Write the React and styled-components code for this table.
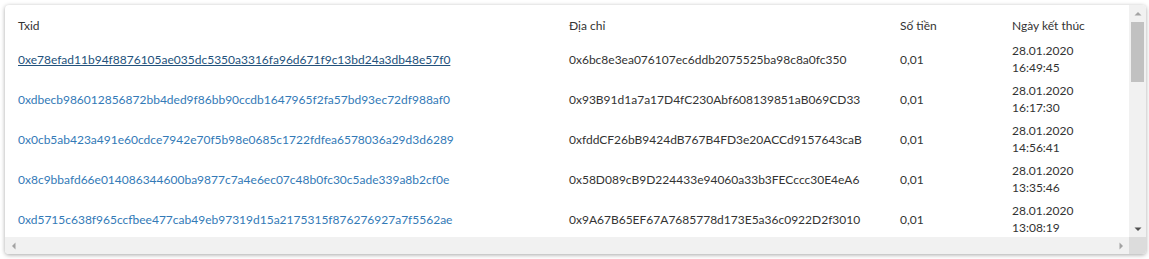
import React from "react";
import styled, { createGlobalStyle } from "styled-components";

const GlobalStyle = createGlobalStyle`
  body {
    margin: 0;
    padding: 5px;
    background: #fff;
    font-family: Lato, "Noto Sans", sans-serif;
  }
`;

const Card = styled.div`
  width: 1141px;
  height: 249px;
  border-radius: 4px;
  box-shadow: 0 1px 4px rgba(0, 0, 0, 0.35);
  background: #fff;
  overflow: hidden;
  display: grid;
  grid-template-columns: 1fr 17px;
  grid-template-rows: 1fr 17px;
`;

const Viewport = styled.div`
  overflow: hidden;
`;

const Row = styled.div`
  display: grid;
  grid-template-columns: 551px 331px 112px 1fr;
  height: ${(p) => (p.$head ? "34px" : "40px")};
  align-items: ${(p) => (p.$head ? "start" : "center")};
  padding-top: ${(p) => (p.$head ? "12px" : "0")};
  box-sizing: border-box;
`;

const Cell = styled.div`
  padding-left: 13px;
  font-size: 12px;
  line-height: 17px;
  color: #333;
  white-space: nowrap;
`;

const TxLink = styled.a`
  color: ${(p) => (p.$active ? "#23527c" : "#337ab7")};
  text-decoration: ${(p) => (p.$active ? "underline" : "none")};
  cursor: pointer;
`;

const VBar = styled.div`
  background: #f1f1f1;
  display: flex;
  flex-direction: column;
`;

const HBar = styled.div`
  background: #f1f1f1;
  display: flex;
  justify-content: space-between;
`;

const Corner = styled.div`
  background: #dcdcdc;
`;

const ArrowBtn = styled.div`
  width: 17px;
  height: 17px;
  flex: none;
  display: flex;
  align-items: center;
  justify-content: center;
`;

const Track = styled.div`
  flex: 1;
  padding: 0 2px;
`;

const Thumb = styled.div`
  height: 60px;
  background: #c1c1c1;
`;

const Arrow = ({ dir, color }) => {
  const pts = {
    up: "0.5,5.5 4,2 7.5,5.5",
    down: "0.5,2.5 4,6 7.5,2.5",
    left: "5.5,0.5 2,4 5.5,7.5",
    right: "2.5,0.5 6,4 2.5,7.5",
  }[dir];
  return (
    <svg width="8" height="8" viewBox="0 0 8 8">
      <polygon points={pts} fill={color} />
    </svg>
  );
};

const rows = [
  {
    tx: "0xe78efad11b94f8876105ae035dc5350a3316fa96d671f9c13bd24a3db48e57f0",
    addr: "0x6bc8e3ea076107ec6ddb2075525ba98c8a0fc350",
    date: "28.01.2020",
    time: "16:49:45",
  },
  {
    tx: "0xdbecb986012856872bb4ded9f86bb90ccdb1647965f2fa57bd93ec72df988af0",
    addr: "0x93B91d1a7a17D4fC230Abf608139851aB069CD33",
    date: "28.01.2020",
    time: "16:17:30",
  },
  {
    tx: "0x0cb5ab423a491e60cdce7942e70f5b98e0685c1722fdfea6578036a29d3d6289",
    addr: "0xfddCF26bB9424dB767B4FD3e20ACCd9157643caB",
    date: "28.01.2020",
    time: "14:56:41",
  },
  {
    tx: "0x8c9bbafd66e014086344600ba9877c7a4e6ec07c48b0fc30c5ade339a8b2cf0e",
    addr: "0x58D089cB9D224433e94060a33b3FECccc30E4eA6",
    date: "28.01.2020",
    time: "13:35:46",
  },
  {
    tx: "0xd5715c638f965ccfbee477cab49eb97319d15a2175315f876276927a7f5562ae",
    addr: "0x9A67B65EF67A7685778d173E5a36c0922D2f3010",
    date: "28.01.2020",
    time: "13:08:19",
  },
];

export default function App() {
  return (
    <>
      <GlobalStyle />
      <Card>
        <Viewport>
          <Row $head>
            <Cell>Txid</Cell>
            <Cell>Địa chỉ</Cell>
            <Cell>Số tiền</Cell>
            <Cell>Ngày kết thúc</Cell>
          </Row>
          {rows.map((r, i) => (
            <Row key={r.tx}>
              <Cell>
                <TxLink $active={i === 0}>{r.tx}</TxLink>
              </Cell>
              <Cell>{r.addr}</Cell>
              <Cell>0,01</Cell>
              <Cell>
                {r.date}
                <br />
                {r.time}
              </Cell>
            </Row>
          ))}
        </Viewport>
        <VBar>
          <ArrowBtn>
            <Arrow dir="up" color="#a3a3a3" />
          </ArrowBtn>
          <Track>
            <Thumb />
          </Track>
          <ArrowBtn>
            <Arrow dir="down" color="#505050" />
          </ArrowBtn>
        </VBar>
        <HBar>
          <ArrowBtn>
            <Arrow dir="left" color="#a3a3a3" />
          </ArrowBtn>
          <ArrowBtn>
            <Arrow dir="right" color="#a3a3a3" />
          </ArrowBtn>
        </HBar>
        <Corner />
      </Card>
    </>
  );
}
